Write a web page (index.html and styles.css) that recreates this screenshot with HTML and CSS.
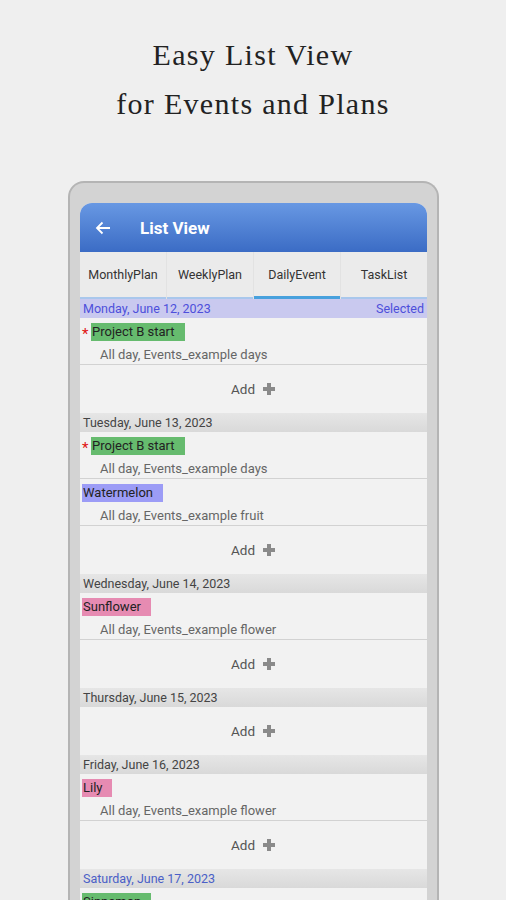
FILE: index.html
```html
<!DOCTYPE html>
<html>
<head>
<meta charset="utf-8">
<link rel="stylesheet" href="styles.css">
</head>
<body>
<div class="page">
  <div class="headline">
    <div>Easy List View</div>
    <div>for Events and Plans</div>
  </div>
  <div class="phone">
    <div class="screen">
      <div class="appbar">
        <svg class="back" width="16" height="14" viewBox="0 0 16 14"><path d="M15 7H2.5M7.5 1.5L2 7l5.5 5.5" fill="none" stroke="#fff" stroke-width="1.8"/></svg>
        <span class="appbar-title">List View</span>
      </div>
      <div class="tabs">
        <div class="tab">MonthlyPlan</div>
        <div class="tab">WeeklyPlan</div>
        <div class="tab active">DailyEvent</div>
        <div class="tab">TaskList</div>
      </div>
      <div class="list">
        <div class="day selected"><span>Monday, June 12, 2023</span><span>Selected</span></div>
        <div class="item">
          <div class="label-row"><span class="star">*</span><span class="label green">Project B start</span></div>
          <div class="sub">All day, Events_example days</div>
        </div>
        <div class="add">Add <span class="plus"></span></div>

        <div class="day"><span>Tuesday, June 13, 2023</span></div>
        <div class="item">
          <div class="label-row"><span class="star">*</span><span class="label green">Project B start</span></div>
          <div class="sub">All day, Events_example days</div>
        </div>
        <div class="item">
          <div class="label-row"><span class="label purple">Watermelon</span></div>
          <div class="sub">All day, Events_example fruit</div>
        </div>
        <div class="add">Add <span class="plus"></span></div>

        <div class="day"><span>Wednesday, June 14, 2023</span></div>
        <div class="item">
          <div class="label-row"><span class="label pink">Sunflower</span></div>
          <div class="sub">All day, Events_example flower</div>
        </div>
        <div class="add">Add <span class="plus"></span></div>

        <div class="day"><span>Thursday, June 15, 2023</span></div>
        <div class="add">Add <span class="plus"></span></div>

        <div class="day"><span>Friday, June 16, 2023</span></div>
        <div class="item">
          <div class="label-row"><span class="label pink">Lily</span></div>
          <div class="sub">All day, Events_example flower</div>
        </div>
        <div class="add">Add <span class="plus"></span></div>

        <div class="day weekend"><span>Saturday, June 17, 2023</span></div>
        <div class="item">
          <div class="label-row"><span class="label green">Sinnamon</span></div>
        </div>
      </div>
    </div>
  </div>
</div>
</body>
</html>
```

FILE: styles.css
```css
html, body {
  margin: 0;
  padding: 0;
}
body {
  background: #efefef;
  width: 506px;
  height: 900px;
  overflow: hidden;
  font-family: Roboto, "Noto Sans", sans-serif;
}
.page {
  display: flex;
  flex-direction: column;
}
.headline {
  padding-top: 30px;
  text-align: center;
  font-family: "Liberation Serif", serif;
  font-size: 30px;
  line-height: 49px;
  letter-spacing: 1.3px;
  color: #222;
}
.phone {
  margin: 53px 0 0 68px;
  width: 347px;
  height: 800px;
  padding: 20px 10px 0 10px;
  border: 2px solid #b4b4b4;
  border-bottom: none;
  border-radius: 16px 16px 0 0;
  background: #d3d3d3;
}
.screen {
  background: #f2f2f2;
  border-radius: 12px 12px 0 0;
  overflow: hidden;
  height: 100%;
}
.appbar {
  height: 49px;
  display: flex;
  align-items: center;
  background: linear-gradient(#6898e3, #3b6cc5);
  color: #fff;
}
.back {
  margin-left: 15px;
}
.appbar-title {
  margin-left: 29px;
  font-size: 17px;
  font-weight: bold;
}
.tabs {
  display: grid;
  grid-template-columns: repeat(4, 1fr);
  column-gap: 1px;
  background: #e2e2e2;
  height: 47px;
}
.tab {
  display: flex;
  align-items: center;
  justify-content: center;
  background: #ebebeb;
  font-size: 12.5px;
  color: #333;
  border-bottom: 2px solid #a9c7ec;
}
.tab.active {
  border-bottom: 3px solid #48a1dd;
}
.list {
  display: flex;
  flex-direction: column;
}
.day {
  height: 19px;
  display: flex;
  justify-content: space-between;
  align-items: center;
  padding: 0 3px;
  font-size: 12.5px;
  color: #444;
  background: linear-gradient(#e6e6e6, #d9d9d9);
}
.day.selected {
  background: #c9c9ef;
  color: #4d4fdb;
}
.day.weekend {
  color: #4a5fc7;
}
.item {
  height: 46px;
  border-bottom: 1px solid #d2d2d2;
  display: flex;
  flex-direction: column;
}
.label-row {
  margin-top: 5px;
  height: 18px;
  display: flex;
  align-items: stretch;
  padding-left: 2px;
}
.star {
  color: #e01010;
  font-size: 15px;
  width: 9px;
  line-height: 23px;
}
.label {
  font-size: 13px;
  color: #222;
  line-height: 18px;
  padding: 0 10px 0 1px;
}
.green { background: #66bb6e; }
.purple { background: #9c9cf6; }
.pink { background: #e68bb2; }
.sub {
  margin-top: 6px;
  padding-left: 20px;
  font-size: 13px;
  color: #666;
}
.add {
  height: 47px;
  margin-bottom: 1px;
  display: flex;
  align-items: center;
  justify-content: center;
  gap: 8px;
  font-size: 13.5px;
  color: #555;
  padding-right: 1px;
}
.plus {
  width: 12px;
  height: 12px;
  background:
    linear-gradient(#8a8a8a, #8a8a8a) center / 12px 4px no-repeat,
    linear-gradient(#8a8a8a, #8a8a8a) center / 4px 12px no-repeat;
}
```
